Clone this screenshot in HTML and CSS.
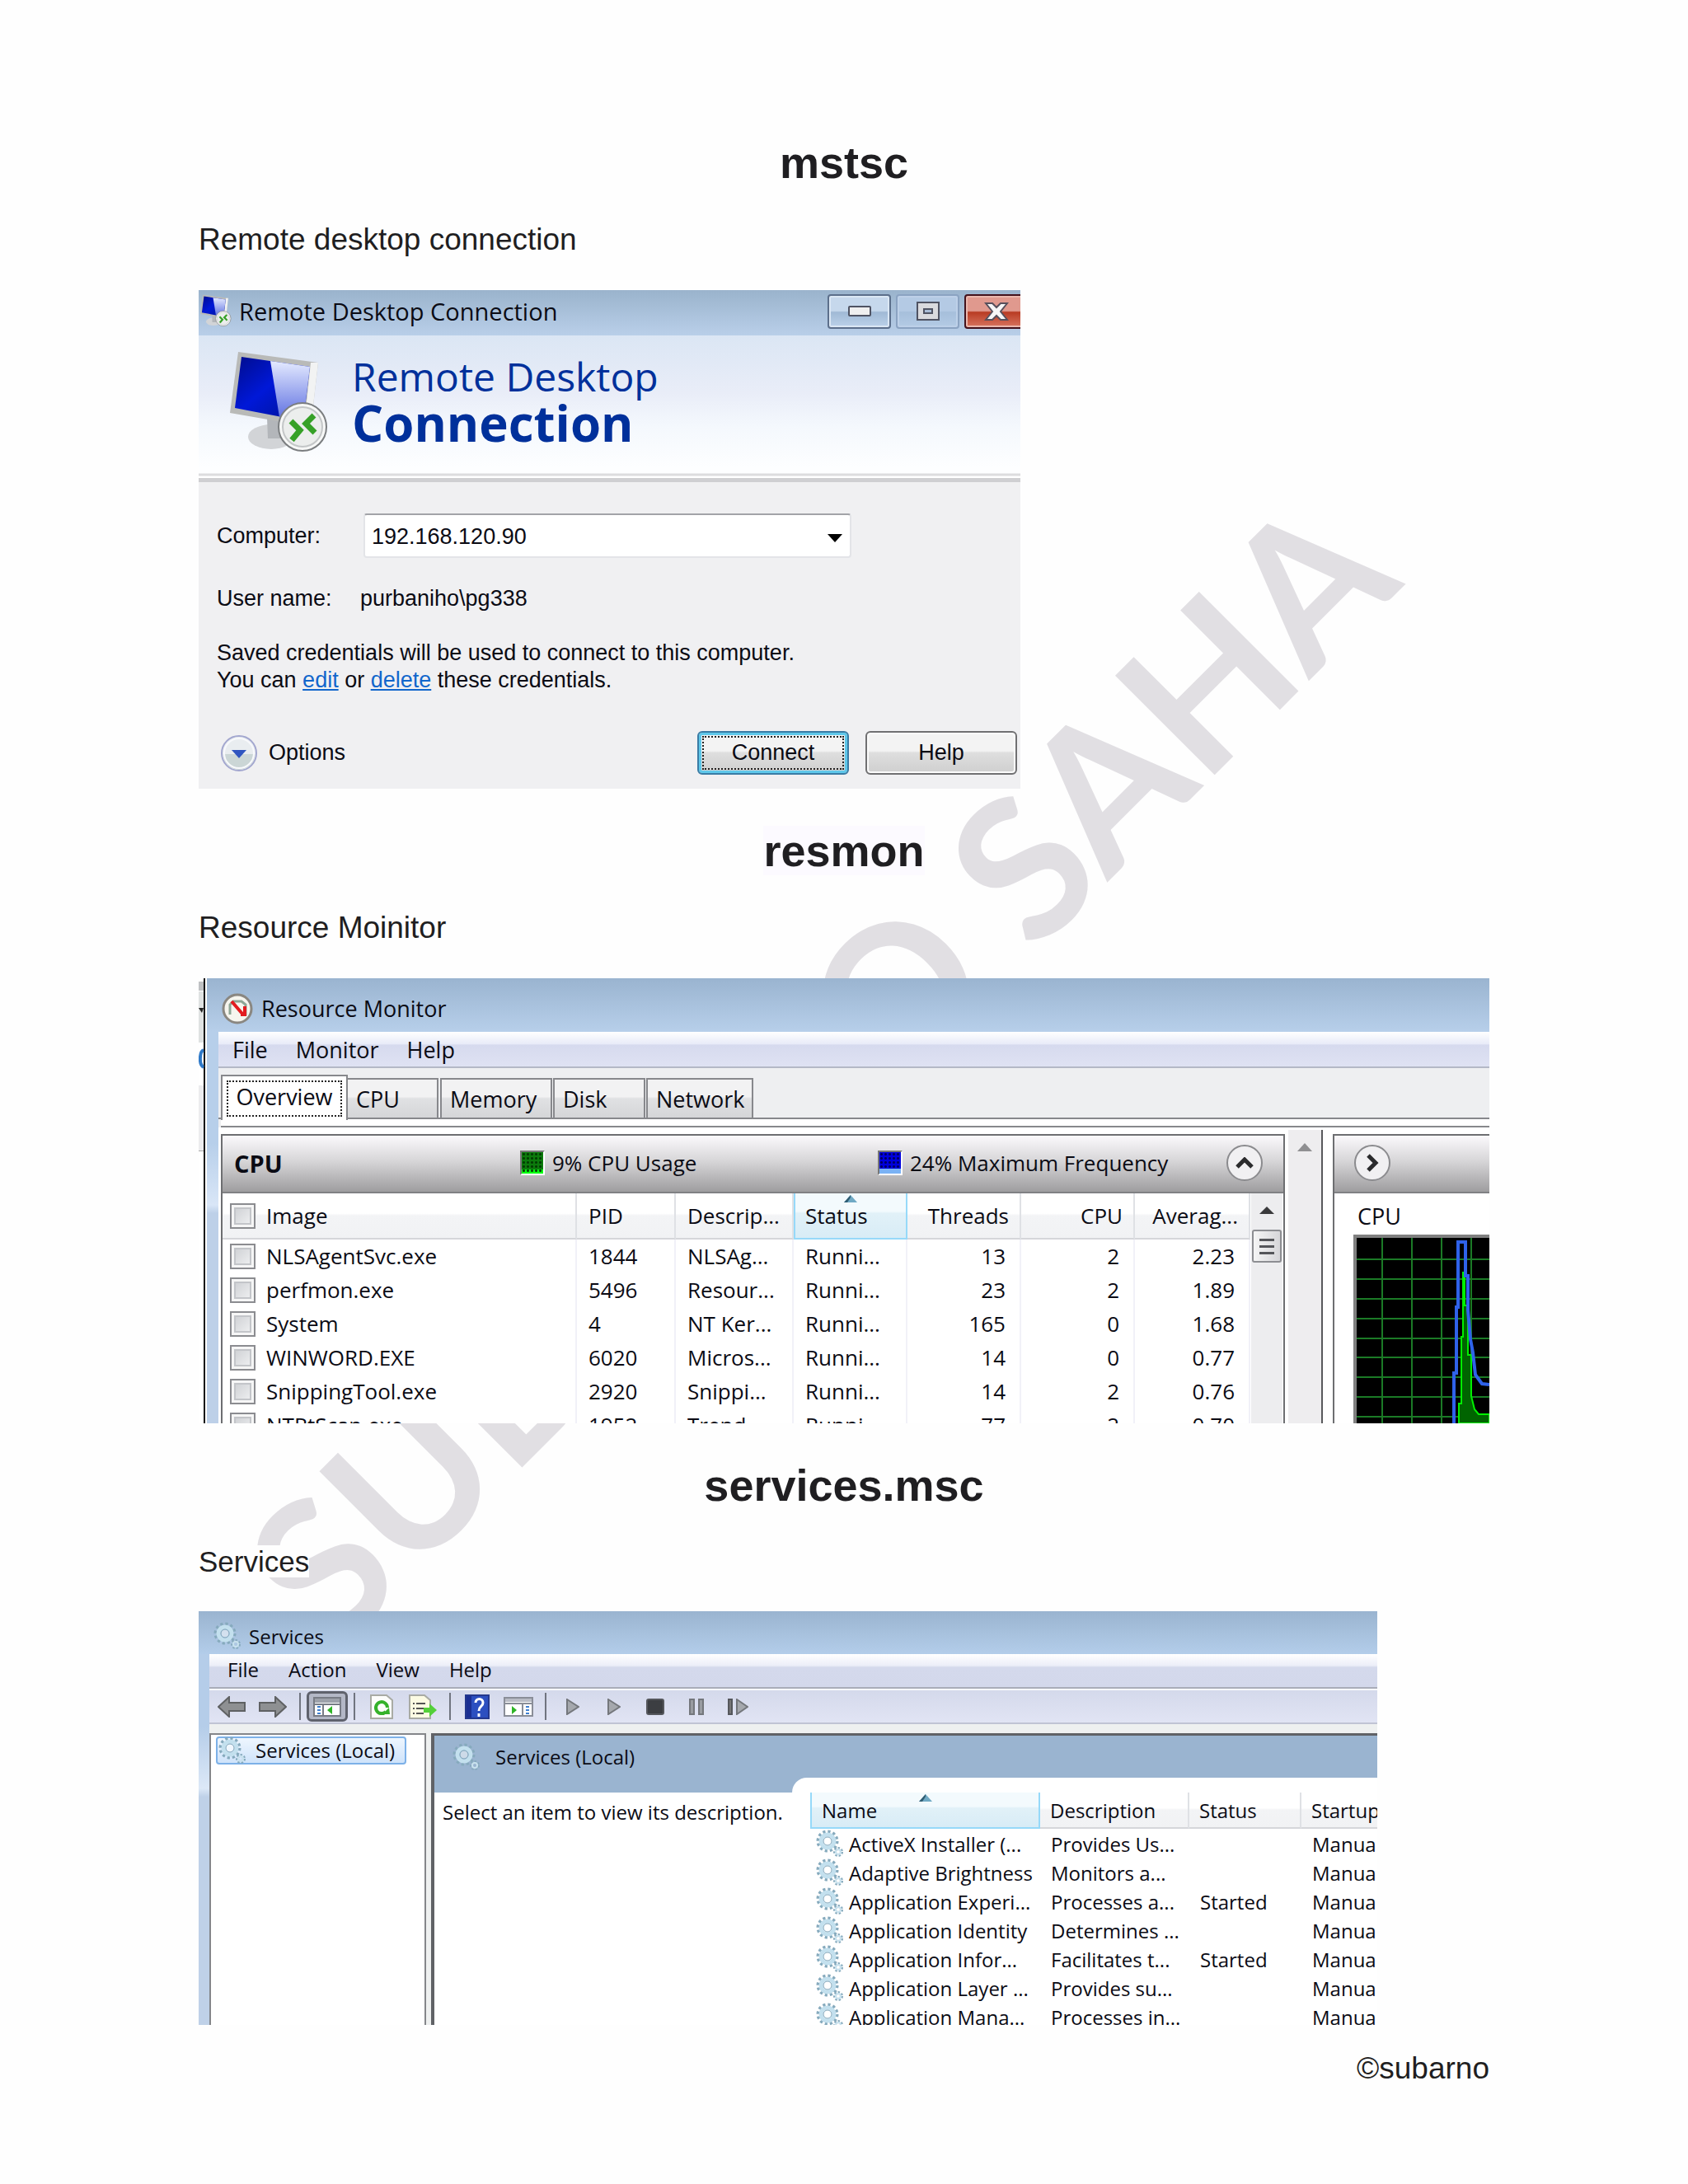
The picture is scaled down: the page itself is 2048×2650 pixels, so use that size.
FILE: index.html
```html
<!DOCTYPE html>
<html lang="en">
<head>
<meta charset="utf-8">
<title>Run commands</title>
<link rel="stylesheet" href="styles.css">
</head>
<body>
<svg class="defs" aria-hidden="true">
  <defs>
    <linearGradient id="screen" x1="0" y1="0" x2="1" y2="1"><stop offset="0" stop-color="#000c8c"/><stop offset=".45" stop-color="#0018d8"/><stop offset="1" stop-color="#00128a"/></linearGradient>
    <linearGradient id="shine" x1="0" y1="0" x2="0" y2="1"><stop offset="0" stop-color="#e4eaff"/><stop offset="1" stop-color="#5a6ce0"/></linearGradient>
    <symbol id="rdc" viewBox="0 0 120 122">
      <ellipse cx="50" cy="103" rx="28" ry="15" fill="#d2d4d7"/>
      <path d="M45 80l22 5-4 20H46z" fill="#b3b6ba"/>
      <path d="M10 0l97 13-9 78-98-17z" fill="#b9bab8"/>
      <path d="M98 13l9 0-9 78-8-2z" fill="#f2f3f3"/>
      <path d="M14 6l83 12-8 66L6 68z" fill="url(#screen)"/>
      <path d="M49 11l48 7-8 66-29-5z" fill="url(#shine)"/>
      <circle cx="88" cy="91" r="29" fill="#f7f8f7" stroke="#7b7e80" stroke-width="2"/>
      <circle cx="88" cy="91" r="24" fill="#eceeed" stroke="#c3c6c7" stroke-width="2"/>
      <path d="M74 84l11 11-10 12M102 77L92 87l11 11" fill="none" stroke="#36a127" stroke-width="7"/>
    </symbol>
    <symbol id="gear" viewBox="0 0 34 34">
      <circle cx="14" cy="14" r="11" fill="none" stroke="#86aabd" stroke-width="5" stroke-dasharray="3 2.76"/>
      <circle cx="14" cy="14" r="8" fill="none" stroke="#c3e0ee" stroke-width="5"/>
      <circle cx="14" cy="14" r="5" fill="#fff" fill-opacity=".5" stroke="#7fa5ba" stroke-width="1"/>
      <circle cx="27" cy="27" r="4" fill="none" stroke="#86aabd" stroke-width="4" stroke-dasharray="2 1.6"/>
      <circle cx="27" cy="27" r="3" fill="none" stroke="#c9e2ee" stroke-width="2"/>
    </symbol>
    <symbol id="sort" viewBox="0 0 16 9"><path d="M0 9L8 0l8 9z" fill="#6fa9c4"/><path d="M0 9L8 0v3L4 9z" fill="#2f5d73"/></symbol>
  </defs>
</svg>

<main class="page">
  <div class="watermark" aria-hidden="true"><span>SUBARNO SAHA</span></div>

  <section class="entry">
    <h2><span>mstsc</span></h2>
    <p><span>Remote desktop connection</span></p>
    <div class="shot rdc">
      <header class="rdc-title">
        <svg class="rdc-small"><use href="#rdc"/></svg>
        <span class="rdc-name">Remote Desktop Connection</span>
        <button class="cap" aria-label="Minimize"><svg width="28" height="14"><rect x="1" y="1" width="26" height="11" rx="1" fill="#efefef" stroke="#4f5363" stroke-width="2"/></svg></button>
        <button class="cap cap-off" aria-label="Maximize"><svg width="28" height="24"><rect x="1" y="1" width="26" height="21" fill="#d9dade" stroke="#4f5363" stroke-width="2"/><rect x="9" y="9" width="10" height="5" fill="#a9bcd6" stroke="#4f5363" stroke-width="2"/></svg></button>
        <button class="cap cap-close" aria-label="Close"><svg width="30" height="24" viewBox="0 0 30 24"><path d="M2 2h8l5 5 5-5h8l-8 10 8 10h-8l-5-5-5 5H2l8-10z" fill="#f6f6f6" stroke="#57505c" stroke-width="2"/></svg></button>
      </header>
      <div class="rdc-banner">
        <svg class="rdc-big"><use href="#rdc"/></svg>
        <div><div class="rdc-line1">Remote Desktop</div><div class="rdc-line2">Connection</div></div>
      </div>
      <form class="rdc-body">
        <div class="field">
          <label for="computer">Computer:</label>
          <span class="combo">
            <select id="computer"><option>192.168.120.90</option></select>
            <svg class="combo-arrow" width="18" height="10"><path d="M0 0h18L9 10z"/></svg>
          </span>
        </div>
        <div class="field field-user"><span>User name:</span><output>purbaniho\pg338</output></div>
        <div class="note">Saved credentials will be used to connect to this computer.<br>You can <a href="#edit">edit</a> or <a href="#delete">delete</a> these credentials.</div>
        <div class="rdc-actions">
          <button type="button" class="options"><svg width="44" height="44" viewBox="0 0 44 44"><circle cx="22" cy="22" r="21" fill="#e9edf0" stroke="#a3a7cf" stroke-width="2"/><path d="M3 23a19 19 0 0 0 38 0z" fill="#cbd6d6"/><circle cx="22" cy="22" r="18" fill="none" stroke="#f8f9fc" stroke-width="2"/><path d="M13 18h18l-9 10z" fill="#2f55c0"/></svg>Options</button>
          <button type="button" class="push push-default">Connect</button>
          <button type="button" class="push">Help</button>
        </div>
      </form>
    </div>
  </section>

  <section class="entry">
    <h2><span class="marked">resmon</span></h2>
    <p><span>Resource Moinitor</span></p>
    <div class="shot resmon">
      <div class="behind"><svg width="8" height="210"><path d="M0 4h6v11H0z" fill="#bfc1c3"/><path d="M0 16h6v62H0z" fill="#dfe2e2"/><path d="M0 36h6l-2 6z" fill="#222"/><path d="M6 87c-5 2-6 18 0 21" fill="none" stroke="#2e79c8" stroke-width="4"/><path d="M0 130h6v82H0z" fill="#ececee"/><path d="M0 210h6" stroke="#aaa" stroke-width="2"/></svg></div>
      <div class="aero">
        <header class="resmon-title">
          <svg width="38" height="38" viewBox="0 0 38 38"><circle cx="19" cy="19" r="17" fill="#f6f5ee" stroke="#8a8781" stroke-width="3"/><path d="M10 26V14l4-4h10l5 4v12h-5" fill="none" stroke="#8da695" stroke-width="3"/><path d="M12 10l13 15M28 16v10h-5" fill="none" stroke="#e31c1f" stroke-width="4"/></svg>
          <span>Resource Monitor</span>
        </header>
        <div class="resmon-client">
          <nav class="menu"><a href="#file">File</a><a href="#monitor">Monitor</a><a href="#help">Help</a></nav>
          <div class="tabs" role="tablist">
            <button class="tab tab-on" role="tab"><span>Overview</span></button>
            <button class="tab tab-cpu" role="tab">CPU</button>
            <button class="tab tab-memory" role="tab">Memory</button>
            <button class="tab tab-disk" role="tab">Disk</button>
            <button class="tab tab-network" role="tab">Network</button>
          </div>
          <div class="rule"></div>
          <div class="panes">
            <div class="pane-main">
              <div class="pane-head">
                <strong>CPU</strong>
                <span class="stat stat-usage"><i class="meter meter-green"></i>9% CPU Usage</span>
                <span class="stat stat-freq"><i class="meter meter-blue"></i>24% Maximum Frequency</span>
                <button class="round" aria-label="Collapse"><svg width="22" height="14"><path d="M2 12l9-9 9 9" fill="none" stroke="#2b2b2d" stroke-width="5"/></svg></button>
              </div>
              <div class="pane-body">
                <table class="procs">
                  <colgroup><col class="c-image"><col class="c-pid"><col class="c-desc"><col class="c-status"><col class="c-threads"><col class="c-cpu"><col class="c-avg"></colgroup>
                  <thead><tr>
                    <th><label><input type="checkbox">Image</label></th><th>PID</th><th>Descrip...</th><th class="sorted"><svg class="sort"><use href="#sort"/></svg>Status</th><th class="num">Threads</th><th class="num">CPU</th><th class="num">Averag...</th>
                  </tr></thead>
                  <tbody>
                    <tr><td><label><input type="checkbox">NLSAgentSvc.exe</label></td><td>1844</td><td>NLSAg...</td><td>Runni...</td><td class="num">13</td><td class="num">2</td><td class="num">2.23</td></tr>
                    <tr><td><label><input type="checkbox">perfmon.exe</label></td><td>5496</td><td>Resour...</td><td>Runni...</td><td class="num">23</td><td class="num">2</td><td class="num">1.89</td></tr>
                    <tr><td><label><input type="checkbox">System</label></td><td>4</td><td>NT Ker...</td><td>Runni...</td><td class="num">165</td><td class="num">0</td><td class="num">1.68</td></tr>
                    <tr><td><label><input type="checkbox">WINWORD.EXE</label></td><td>6020</td><td>Micros...</td><td>Runni...</td><td class="num">14</td><td class="num">0</td><td class="num">0.77</td></tr>
                    <tr><td><label><input type="checkbox">SnippingTool.exe</label></td><td>2920</td><td>Snippi...</td><td>Runni...</td><td class="num">14</td><td class="num">2</td><td class="num">0.76</td></tr>
                    <tr><td><label><input type="checkbox">NTRtScan.exe</label></td><td>1952</td><td>Trend ...</td><td>Runni...</td><td class="num">77</td><td class="num">2</td><td class="num">0.70</td></tr>
                  </tbody>
                </table>
                <div class="scroll">
                  <svg width="18" height="9"><path d="M0 9L9 0l9 9z" fill="#3a3a3c"/></svg>
                  <div class="thumb"><i></i><i></i><i></i></div>
                </div>
              </div>
            </div>
            <div class="gutter"><svg width="18" height="10"><path d="M0 10L9 0l9 10z" fill="#8f8f91"/></svg></div>
            <div class="pane-side">
              <div class="pane-head side-head"><button class="round" aria-label="Expand"><svg width="16" height="22"><path d="M3 2l9 9-9 9" fill="none" stroke="#2b2b2d" stroke-width="5"/></svg></button></div>
              <div class="side-label">CPU</div>
              <svg class="graph" width="165" height="229" viewBox="0 0 165 229">
                <rect width="165" height="229" fill="#808080"/>
                <rect x="4" y="4" width="161" height="225" fill="#000"/>
                <path d="M35 4v225M71 4v225M107 4v225M143 4v225M4 30h161M4 54h161M4 78h161M4 102h161M4 126h161M4 149h161M4 173h161M4 197h161M4 221h161" stroke="#1b7a26" stroke-width="2"/>
                <path d="M128 229V205h3v-81h2V46h2v40h4v60h4v50l4 16 5 6h13v11z" fill="#006400" stroke="#00f000" stroke-width="2"/>
                <path d="M122 229v-61h3V88h2V9h9v41h3v42l3 35 3 16 3 27 8 11 9 1" fill="none" stroke="#2f62ea" stroke-width="4"/>
              </svg>
            </div>
          </div>
        </div>
      </div>
    </div>
  </section>

  <section class="entry entry-services">
    <h2><span>services.msc</span></h2>
    <p><span class="blank">Services</span></p>
    <div class="shot svc">
      <header class="svc-title"><svg class="gear"><use href="#gear"/></svg><span>Services</span></header>
      <div class="svc-client">
        <nav class="menu"><a href="#f">File</a><a href="#a">Action</a><a href="#v">View</a><a href="#h">Help</a></nav>
        <div class="toolbar">
          <button aria-label="Back"><svg width="34" height="26"><path d="M1 13L14 1v7h19v10H14v7z" fill="#8e9092" stroke="#5f6163" stroke-width="2"/></svg></button>
          <button aria-label="Forward"><svg width="34" height="26"><path d="M33 13L20 1v7H1v10h19v7z" fill="#8e9092" stroke="#5f6163" stroke-width="2"/></svg></button>
          <i class="sep"></i>
          <button class="pressed" aria-label="Show tree"><svg width="34" height="24"><path d="M1 1h32v22H1z" fill="#fff" stroke="#777b85" stroke-width="2"/><path d="M2 2h30v5H2z" fill="#9da1aa"/><path d="M12 9v14M2 9h30" stroke="#777b85" stroke-width="2"/><path d="M5 12h4M5 16h4M5 20h4" stroke="#3f7fd0" stroke-width="2"/><path d="M23 11v10l-6-5z" fill="#2fb527"/></svg></button>
          <i class="sep"></i>
          <button aria-label="Refresh"><svg width="28" height="30"><path d="M1 1h19l7 6v22H1z" fill="#fdfdfb" stroke="#a9aba4" stroke-width="2"/><path d="M19 21a7 7 0 1 1 2-5" fill="none" stroke="#35b22b" stroke-width="4"/><path d="M24 24h-9l8-8z" fill="#35b22b"/></svg></button>
          <button aria-label="Export list"><svg width="34" height="30"><path d="M1 1h18l7 6v22H1z" fill="#fcfbe3" stroke="#a9aba4" stroke-width="2"/><path d="M5 11h2M5 17h2M5 23h2M9 11h11M9 17h9M9 23h9" stroke="#555" stroke-width="2"/><path d="M18 16h7v-5l9 8-9 8v-5h-7z" fill="#54d03a"/></svg></button>
          <i class="sep"></i>
          <button aria-label="Help"><svg width="30" height="30"><path d="M1 1h28v28H1z" fill="#2c4fc0" stroke="#24388d" stroke-width="2"/><path d="M2 2h6v26H2z" fill="#1b2f93"/><path d="M13 10c0-6 9-6 9 0 0 5-5 4-5 10M17 23v4" fill="none" stroke="#fff" stroke-width="3"/></svg></button>
          <button aria-label="Show pane"><svg width="36" height="24"><path d="M1 1h34v22H1z" fill="#fff" stroke="#8a8e98" stroke-width="2"/><path d="M2 2h32v4H2z" fill="#b9bcc5"/><path d="M23 9v14M2 8h32" stroke="#8a8e98" stroke-width="2"/><path d="M27 12h4M27 16h4M27 20h4" stroke="#3f7fd0" stroke-width="2"/><path d="M10 11v10l6-5z" fill="#2fb527"/></svg></button>
          <i class="sep"></i>
          <button aria-label="Start"><svg width="16" height="20"><path d="M1 1l14 9L1 19z" fill="#a5a8ad" stroke="#74777c" stroke-width="2"/></svg></button>
          <button aria-label="Resume"><svg width="16" height="20"><path d="M1 1l14 9L1 19z" fill="#a5a8ad" stroke="#74777c" stroke-width="2"/></svg></button>
          <button aria-label="Stop"><svg width="22" height="20"><rect x="1" y="1" width="20" height="18" rx="2" fill="#3c3e42" stroke="#55575c" stroke-width="2"/></svg></button>
          <button aria-label="Pause"><svg width="18" height="20"><path d="M1 1h5v18H1zM12 1h5v18h-5z" fill="#999ca1" stroke="#74777c" stroke-width="2"/></svg></button>
          <button aria-label="Restart"><svg width="25" height="20"><path d="M1 1h4v18H1z" fill="#777" stroke="#55575c" stroke-width="2"/><path d="M11 1l13 9-13 9z" fill="#a5a8ad" stroke="#74777c" stroke-width="2"/></svg></button>
        </div>
        <div class="svc-panes">
          <div class="tree"><a class="node" href="#local"><svg class="gear"><use href="#gear"/></svg>Services (Local)</a></div>
          <div class="detail">
            <div class="detail-head"><svg class="gear"><use href="#gear"/></svg>Services (Local)</div>
            <div class="detail-text">Select an item to view its description.</div>
            <div class="list">
              <table class="svcs">
                <colgroup><col class="s-name"><col class="s-desc"><col class="s-status"><col class="s-start"></colgroup>
                <thead><tr><th class="sorted"><svg class="sort"><use href="#sort"/></svg>Name</th><th>Description</th><th>Status</th><th>Startup</th></tr></thead>
                <tbody>
                  <tr><td><svg class="gear"><use href="#gear"/></svg>ActiveX Installer (...</td><td>Provides Us...</td><td></td><td>Manual</td></tr>
                  <tr><td><svg class="gear"><use href="#gear"/></svg>Adaptive Brightness</td><td>Monitors a...</td><td></td><td>Manual</td></tr>
                  <tr><td><svg class="gear"><use href="#gear"/></svg>Application Experi...</td><td>Processes a...</td><td>Started</td><td>Manual</td></tr>
                  <tr><td><svg class="gear"><use href="#gear"/></svg>Application Identity</td><td>Determines ...</td><td></td><td>Manual</td></tr>
                  <tr><td><svg class="gear"><use href="#gear"/></svg>Application Infor...</td><td>Facilitates t...</td><td>Started</td><td>Manual</td></tr>
                  <tr><td><svg class="gear"><use href="#gear"/></svg>Application Layer ...</td><td>Provides su...</td><td></td><td>Manual</td></tr>
                  <tr><td><svg class="gear"><use href="#gear"/></svg>Application Mana...</td><td>Processes in...</td><td></td><td>Manual</td></tr>
                </tbody>
              </table>
            </div>
          </div>
        </div>
      </div>
    </div>
  </section>

  <footer class="credit">©subarno</footer>
</main>
</body>
</html>
```
FILE: styles.css
```css
*, *::before, *::after { box-sizing: border-box; }
body { margin: 0; background: #fefefe; color: #1f1e21; font-family: "Liberation Sans", Arial, sans-serif; }
button, select { font: inherit; color: inherit; margin: 0; }
svg { display: block; flex: none; }
.defs { position: absolute; width: 0; height: 0; }

.page { position: relative; min-height: 100vh; padding: 168px 241px 100px; }
.entry, .credit { position: relative; }
.entry + .entry { margin-top: 46px; }
h2 { margin: 0 0 42px; font-size: 54px; line-height: 58px; padding-bottom: 2px; font-weight: 700; text-align: center; }
.entry p { margin: 0 0 40px; font-size: 37px; line-height: 42px; }
.entry-services p { font-size: 35px; line-height: 40px; }
.marked { background: #fcfaff; }
.blank { background: #fefefe; }
.credit { margin-top: 32px; font-size: 37px; line-height: 42px; text-align: right; }

.watermark { position: absolute; inset: 0; display: grid; place-items: center; overflow: hidden; padding-right: 68px; padding-bottom: 60px; }
.watermark span { color: #e1dfe3; font-family: Lato, Carlito, sans-serif; font-size: 236px; font-weight: 700; line-height: 1; white-space: nowrap; transform: rotate(-45deg); }

.shot { position: relative; overflow: hidden; color: #0b0b14; font-family: "Open Sans", "Noto Sans", sans-serif; }

/* Remote Desktop Connection */
.rdc { max-width: 997px; height: 605px; background: #f0f0f2; }
.rdc-title { display: flex; align-items: flex-start; height: 55px; padding: 5px 0 0 2px; background: linear-gradient(#9ab3cc, #b9cfe9); }
.rdc-small { width: 38px; height: 40px; }
.rdc-name { flex: 1; padding-left: 9px; font-size: 29px; line-height: 42px; white-space: nowrap; }
.cap { flex: none; display: grid; place-items: center; width: 77px; height: 42px; margin-right: 6px; padding: 0; border: 2px solid #5c6f8b; border-radius: 4px; background: linear-gradient(#c6d8ec 48%, #a0b9d5 52%, #bcd2ea); box-shadow: inset 0 0 0 2px #dbe7f4; }
.cap-off { border-color: #8ba3c2; background: linear-gradient(#b4cae4 48%, #a6bfdb 52%, #b4cbe5); box-shadow: inset 0 0 0 2px #bdd0e8; }
.cap-close { width: 78px; margin-right: -10px; border-color: #43121c; background: linear-gradient(#e0998e 48%, #b93b23 52%, #d77560); box-shadow: inset 0 0 0 2px #eab7ad; }
.rdc-banner { display: flex; height: 178px; padding: 20px 0 0 38px; gap: 28px; border-bottom: 5px solid #cfcfd2; background: linear-gradient(#dbe6f4, #e9edf8 70px, #f4f8fd 110px, #fdfeff 160px, #fdfeff 167px, #dcdcde 168px, #dcdcde 170px, #fff 171px); color: #00309b; white-space: nowrap; }
.rdc-big { width: 120px; height: 122px; }
.rdc-line1 { padding-top: 2px; font-size: 48px; line-height: 56px; }
.rdc-line2 { font-size: 60px; line-height: 56px; font-weight: 700; }
.rdc-body { padding: 38px 4px 0 22px; font-family: "Liberation Sans", Arial, sans-serif; font-size: 27px; }
.field { display: grid; grid-template-columns: 174px auto; justify-content: start; align-items: center; }
.combo { position: relative; margin-left: 4px; }
.combo select { display: block; width: 592px; height: 54px; padding: 2px 8px 0; border: 2px solid #e3e4e8; border-top-color: #a2a3a8; border-radius: 4px; background: #fff; appearance: none; }
.combo-arrow { position: absolute; right: 11px; top: 25px; }
.field-user { margin-top: 29px; line-height: 40px; }
.note { margin-top: 30px; line-height: 33px; white-space: nowrap; }
.note a { color: #1166cc; }
.rdc-actions { display: flex; align-items: center; gap: 20px; margin-top: 45px; }
.options { display: flex; align-items: center; gap: 14px; margin-right: auto; padding: 0 0 0 5px; border: 0; background: none; }
.push { width: 184px; height: 53px; padding: 0; border: 2px solid #707072; border-radius: 6px; background: linear-gradient(#f3f3f3 45%, #dedede 50%, #cfcfcf); box-shadow: inset 0 0 0 2px #fbfbfb; }
.push-default { border-color: #3a7ca5; box-shadow: inset 0 0 0 3px #5fc8ea; outline: 2px dotted #222; outline-offset: -8px; }

/* shared chrome */
.menu { display: flex; }
.menu a { color: inherit; text-decoration: none; }
.sort { position: absolute; left: 50%; top: 2px; width: 16px; height: 9px; margin-left: -8px; }
table { border-collapse: separate; border-spacing: 0; table-layout: fixed; }
th, td { padding: 0; font-weight: 400; text-align: left; white-space: nowrap; overflow: hidden; }
th { position: relative; background: linear-gradient(#fff 45%, #f3f4f6 50%, #f1f2f4); border-right: 2px solid #dfe1e5; border-bottom: 2px solid #d5d6da; }
th.sorted { border: 2px solid #96d9f9; border-top: 0; background: linear-gradient(#f3fafd 40%, #e1f1f8 45%, #d8ecf6); }
.num { text-align: right; }

/* Resource Monitor */
.resmon { display: flex; height: 540px; background: #fff; font-size: 27px; }
.behind { flex: none; width: 10px; background: #fff; border-right: 2px solid #fff; box-shadow: inset -2px 0 0 #111; }
.aero { flex: 1; min-width: 0; padding-left: 14px; background: linear-gradient(#9ab4d0, #b7cfea 65px, #b7cfea 200px, #d9e6f7 275px, #bdd0e8 285px); }
.resmon-title { display: flex; align-items: center; gap: 10px; height: 65px; margin-left: -14px; padding: 8px 0 0 18px; background: linear-gradient(#9ab4d0, #b7cfea); }
.resmon-client { background: #eeeff1; }
.resmon .menu { height: 44px; gap: 34px; padding-left: 17px; border-bottom: 2px solid #b4b8c6; background: linear-gradient(#fff, #e8ebf8 35%, #d6daee 38%, #dfe2f3); line-height: 44px; }
.tabs { display: flex; align-items: flex-end; height: 62px; padding-left: 3px; border-bottom: 2px solid #87888c; }
.tab { height: 48px; padding: 2px 0 0 10px; border: 2px solid #87888c; border-bottom: 0; background: linear-gradient(#f2f2f3 45%, #e0e1e3 50%, #d5d6d8); line-height: 44px; text-align: left; white-space: nowrap; }
.tab-on { width: 154px; height: 55px; margin-bottom: -3px; padding: 5px; background: #fff; line-height: 36px; text-align: center; }
.tab-on span { display: block; height: 44px; border: 2px dotted #222; }
.tab-cpu { width: 110px; border-left: 0; }
.tab-memory { width: 136px; margin-left: 2px; }
.tab-disk { width: 112px; margin-left: 1px; }
.tab-network { width: 130px; margin-left: 1px; }
.rule { height: 10px; margin-left: 3px; border-bottom: 2px solid #87888c; background: #fff; }
.panes { display: flex; height: 359px; background: #fff; }
.pane-main { flex: none; width: 1291px; margin: 8px 4px 0 3px; border: 2px solid #6d6e71; border-bottom: 0; font-size: 26px; }
.pane-head { display: flex; align-items: center; height: 70px; padding: 0 25px 2px 14px; border-bottom: 2px solid #808184; background: linear-gradient(#fbf9fc, #d7d6d8 45%, #9e9d9f); }
.pane-head strong { width: 347px; font-size: 29px; }
.stat { display: flex; align-items: center; gap: 9px; white-space: nowrap; }
.stat-usage { width: 434px; }
.meter { width: 30px; height: 30px; border: 2px solid #777; border-right: 2px solid #fff; border-bottom: 2px solid #fff; }
.meter-green { background: radial-gradient(circle, #023c02 1px, transparent 2px) 0 0 / 5px 5px, linear-gradient(#0c7a0c 80%, #00ff10 80%); }
.meter-blue { background: linear-gradient(transparent 76%, #7ab2f5 76%), radial-gradient(circle, #000060 1px, transparent 2px) 0 0 / 5px 5px, #0000dd; }
.round { display: grid; place-items: center; width: 44px; height: 44px; margin-left: auto; padding: 0; border: 2px solid #8b8b8e; border-radius: 50%; background: #f1f0f2; }
.pane-body { display: flex; }
.procs { width: 1247px; }
.procs th { height: 56px; padding-left: 14px; }
.procs td { height: 41px; padding: 0 0 1px 14px; border-right: 2px solid #f1f1f8; }
.procs th:first-child, .procs td:first-child { padding-left: 9px; }
.procs th.num { padding-right: 13px; }
.procs td.num { padding-right: 17px; }
.procs th.sorted { padding-left: 12px; }
.procs label { display: flex; align-items: center; gap: 13px; height: 31px; }
.procs input { appearance: none; flex: none; width: 31px; height: 31px; margin: 0; border: 2px solid #8b8c90; background: linear-gradient(135deg, #c9cbcf, #f4f5f6); box-shadow: inset 0 0 0 3px #f6f6f6, inset 0 0 0 5px #c3c5c9; }
.c-image { width: 430px; } .c-pid { width: 120px; } .c-desc { width: 143px; } .c-status { width: 138px; } .c-threads { width: 138px; } .c-cpu { width: 138px; } .c-avg { width: 140px; }
.scroll { display: flex; flex-direction: column; align-items: center; gap: 19px; width: 38px; height: 290px; margin-left: 1px; padding-top: 16px; background: #ededef; }
.thumb { display: flex; flex-direction: column; align-items: center; justify-content: center; gap: 5px; width: 36px; height: 40px; border: 2px solid #8d8e92; border-radius: 3px; background: linear-gradient(90deg, #f5f5f5, #d6d6d9); }
.thumb i { width: 18px; height: 3px; background: #55565a; }
.gutter { flex: none; display: flex; justify-content: center; width: 42px; margin-top: 3px; padding-top: 16px; border-right: 2px solid #59595c; background: #eeedef; }
.pane-side { flex: 1; min-width: 0; margin: 8px 0 0 12px; border: solid #6d6e71; border-width: 2px 0 0 2px; }
.side-head { padding-left: 24px; }
.side-head .round { margin-left: 0; }
.side-label { padding: 7px 0 0 28px; line-height: 42px; }
.graph { margin: 1px 0 0 23px; }

/* Services */
.gear { width: 34px; height: 34px; }
.svc { max-width: 1430px; height: 502px; padding-left: 13px; background: linear-gradient(#9ab4d0, #b5cde9 52px, #b5cde9 140px, #dce8f7 215px, #bfd1e8 225px); font-size: 24px; }
.svc-title { display: flex; align-items: center; gap: 9px; height: 52px; margin-left: -13px; padding: 8px 0 0 18px; background: linear-gradient(#9ab4d0, #b3cdea); }
.svc-client { background: #eef0f0; }
.svc .menu { height: 42px; gap: 36px; padding-left: 22px; border-bottom: 2px solid #a9adb9; background: linear-gradient(#fff, #eceef8 35%, #d4d9ec 40%, #d3d8eb); line-height: 38px; }
.toolbar { display: flex; align-items: center; height: 43px; padding-left: 2px; border-top: 2px solid #f7f8fc; border-bottom: 2px solid #c0c4d4; background: linear-gradient(#d4d9eb, #e1e4f4); }
.toolbar button { display: grid; place-items: center; flex: none; width: 50px; height: 37px; padding: 0; border: 0; background: none; }
.toolbar .pressed { border: 3px solid #5f626d; border-radius: 6px; background: #b3b7c6; }
.sep { flex: none; width: 2px; height: 33px; margin: 0 7px; background: #70747f; }
.svc-panes { display: flex; gap: 6px; height: 354px; margin-top: 11px; }
.tree { flex: none; width: 263px; padding: 2px 6px; border: 2px solid #84868a; border-bottom: 0; background: #fff; }
.node { display: flex; align-items: center; gap: 11px; width: 231px; height: 34px; padding-left: 1px; border: 2px solid #7db1e8; border-radius: 4px; background: linear-gradient(#eef6fe, #cfe3fa); color: inherit; line-height: 28px; text-decoration: none; white-space: nowrap; }
.detail { flex: 1; min-width: 0; display: grid; grid-template: 51px 18px 1fr / 434px minmax(0, 1fr); border: solid #606266; border-width: 3px 0 0 4px; background: #fff; }
.detail-head { grid-area: 1 / 1 / 3 / 3; display: flex; gap: 18px; padding: 9px 0 0 22px; background: #9ab4d0; line-height: 34px; }
.detail-text { grid-area: 3 / 1; padding-left: 10px; line-height: 48px; white-space: nowrap; }
.list { grid-area: 2 / 2 / 4 / 3; padding: 18px 0 0 22px; border-top-left-radius: 18px; background: #fff; overflow: hidden; }
.svcs { width: 760px; }
.svcs th { height: 44px; padding-left: 12px; }
.svcs tbody::before { content: ""; display: block; height: 1px; }
.svcs td { height: 35px; padding-left: 13px; line-height: 35px; }
.svcs td:first-child { padding-left: 7px; }
.svcs td .gear { float: left; margin-right: 6px; }
.s-name { width: 279px; } .s-desc { width: 181px; } .s-status { width: 136px; } .s-start { width: 164px; }
```
